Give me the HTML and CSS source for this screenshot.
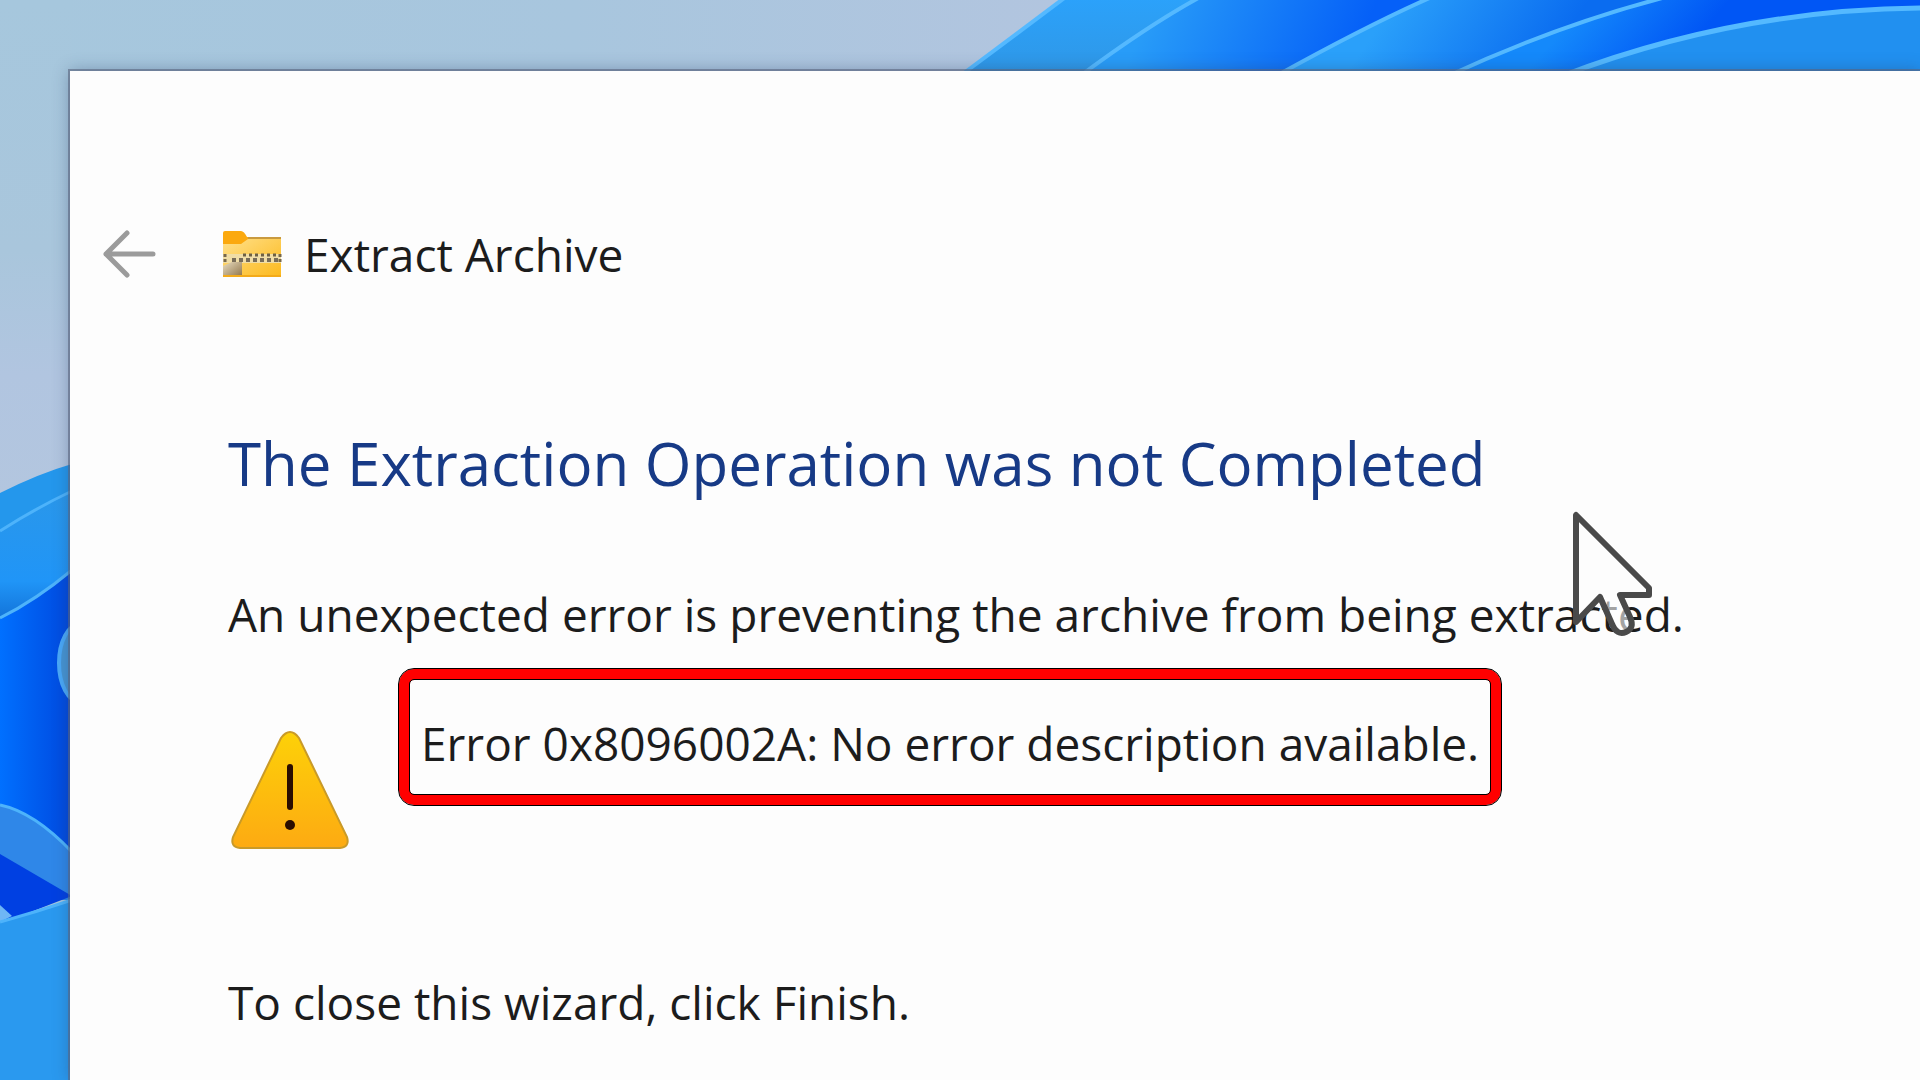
FILE: index.html
```html
<!DOCTYPE html>
<html lang="en">
<head>
    <meta charset="UTF-8">
    <meta name="viewport" content="width=device-width, initial-scale=1.0">
    <title>Extract Archive</title>
    <link rel="stylesheet" href="styles.css">
</head>
<body>
    <!-- Desktop wallpaper -->
    <svg class="wallpaper" viewBox="0 0 1920 1080" preserveAspectRatio="xMinYMin slice" aria-hidden="true">
        <defs>
            <linearGradient id="sky" x1="0" y1="0" x2="1" y2="0">
                <stop offset="0" stop-color="#a6c7dd"/>
                <stop offset="0.3" stop-color="#a8c6de"/>
                <stop offset="0.55" stop-color="#b2c5df"/>
            </linearGradient>
            <linearGradient id="skyLeft" x1="0" y1="0" x2="0" y2="1">
                <stop offset="0" stop-color="#a6c7dd"/>
                <stop offset="0.5" stop-color="#a9c6dc"/>
                <stop offset="0.75" stop-color="#b1c5e0"/>
                <stop offset="1" stop-color="#b3c6df"/>
            </linearGradient>
            <linearGradient id="petalA" x1="0" y1="0" x2="0" y2="1">
                <stop offset="0" stop-color="#2ba2fb"/>
                <stop offset="1" stop-color="#2f97e6"/>
            </linearGradient>
            <linearGradient id="petalB" gradientUnits="userSpaceOnUse" x1="1150" y1="10" x2="1340" y2="90">
                <stop offset="0" stop-color="#289cf8"/>
                <stop offset="1" stop-color="#0560f8"/>
            </linearGradient>
            <linearGradient id="petalC" gradientUnits="userSpaceOnUse" x1="1390" y1="10" x2="1520" y2="100">
                <stop offset="0" stop-color="#2aa0fa"/>
                <stop offset="1" stop-color="#0a6cf0"/>
            </linearGradient>
            <linearGradient id="petalD" gradientUnits="userSpaceOnUse" x1="1580" y1="10" x2="1660" y2="80">
                <stop offset="0" stop-color="#1489fb"/>
                <stop offset="1" stop-color="#0056f5"/>
            </linearGradient>
            <linearGradient id="deep" x1="0" y1="0" x2="1" y2="0">
                <stop offset="0" stop-color="#0070ff"/>
                <stop offset="1" stop-color="#0048de"/>
            </linearGradient>
            <linearGradient id="band" x1="0" y1="0" x2="0" y2="1">
                <stop offset="0" stop-color="#2a97ea"/>
                <stop offset="0.7" stop-color="#2095f7"/>
                <stop offset="1" stop-color="#1272d8"/>
            </linearGradient>
        </defs>
        <rect width="1920" height="1080" fill="url(#sky)"/>
        <rect width="72" height="500" fill="url(#skyLeft)"/>

        <path d="M960 76L1067 -4H1930V76Z" fill="url(#petalA)"/>
        <path d="M1080 76Q1150 24 1202 -4H1930V76Z" fill="url(#petalB)"/>
        <path d="M1276 76Q1370 24 1434 -4H1930V76Z" fill="url(#petalC)"/>
        <path d="M1448 76Q1560 24 1670 -4H1930V76Z" fill="url(#petalD)"/>
        <path d="M1562 76Q1740 8 1930 8V76Z" fill="#2190f0"/>
        <g fill="none" stroke="#54b9ff" stroke-width="4">
            <path d="M960 76L1067 -4"/>
            <path d="M1080 76Q1150 24 1202 -4"/>
            <path d="M1276 76Q1370 24 1434 -4"/>
            <path d="M1448 76Q1560 24 1670 -4"/>
            <path d="M1562 76Q1740 8 1930 8" stroke-width="5"/>
        </g>

        <path d="M0 493Q40 473 72 464V600H0Z" fill="#2497ec"/>
        <path d="M0 531Q36 508 72 491V620H0Z" fill="url(#band)"/>
        <path d="M0 618Q36 600 72 570V900H0Z" fill="url(#deep)"/>
        <ellipse cx="80" cy="663" rx="21" ry="39" fill="#4795d3" stroke="#4aa9f8" stroke-width="4"/>
        <path d="M0 805Q34 812 72 852V900H0Z" fill="#2f87e8"/>
        <path d="M0 854L72 896L10 920H0Z" fill="#0040e2"/>
        <path d="M0 905L12 916L0 922Z" fill="#6fb6f5"/>
        <path d="M0 922Q36 912 72 900V1080H0Z" fill="#2a99ef"/>
        <g fill="none" stroke="#4db3fb" stroke-width="3">
            <path d="M0 531Q36 508 72 491"/>
            <path d="M0 618Q36 600 72 570"/>
            <path d="M0 805Q34 812 72 852"/>
            <path d="M0 922Q36 912 72 900"/>
        </g>
    </svg>

    <main class="wizard">
        <header class="wizard-header">
            <button class="back-button" type="button" aria-label="Back" disabled>
                <svg width="54" height="48" viewBox="0 0 54 48">
                    <path d="M25 3L4 24L25 45M4 24H51" fill="none" stroke="#9b9b9b" stroke-width="5" stroke-linecap="round" stroke-linejoin="round"/>
                </svg>
            </button>
            <svg class="folder-icon" width="60" height="48" viewBox="0 0 60 48" aria-hidden="true">
                <defs>
                    <linearGradient id="folder" x1="0" y1="0" x2="1" y2="1">
                        <stop offset="0" stop-color="#ffe08a"/>
                        <stop offset="1" stop-color="#fcb91c"/>
                    </linearGradient>
                    <linearGradient id="pull" x1="0" y1="0" x2="1" y2="1">
                        <stop offset="0" stop-color="#e8dcc0"/>
                        <stop offset="1" stop-color="#8e7348"/>
                    </linearGradient>
                </defs>
                <path d="M1 3Q1 1 3 1H19Q22 1 25 7H58V20H1Z" fill="#fba90f"/>
                <path d="M1 14H19L26 9H59V47H1Z" fill="url(#folder)"/>
                <path d="M26 8H59" stroke="#c99a3f" stroke-width="2"/>
                <path d="M1 24H59V33H1Z" fill="#f0dda6"/>
                <path d="M21 25H54" stroke="#6d6045" stroke-width="3" stroke-dasharray="3 3"/>
                <path d="M10 30H57" stroke="#776c58" stroke-width="4" stroke-dasharray="4 3"/>
                <path d="M3 24V34M58 24V34" stroke="#77684b" stroke-width="3" stroke-dasharray="3 2"/>
                <path d="M1 47V36L10 32H20V47Z" fill="url(#pull)"/>
                <path d="M1 46H59" stroke="#f3aa19" stroke-width="2"/>
            </svg>
            <h1>Extract Archive</h1>
        </header>

        <section class="wizard-body">
            <h2>The Extraction Operation was not Completed</h2>
            <p class="message">An unexpected error is preventing the archive from being extracted.</p>
            <div class="error-row">
                <svg class="warning-icon" width="120" height="120" viewBox="0 0 120 120" aria-hidden="true">
                    <defs>
                        <linearGradient id="warning" x1="0" y1="0" x2="0" y2="1">
                            <stop offset="0" stop-color="#fdd108"/>
                            <stop offset="1" stop-color="#fdaa12"/>
                        </linearGradient>
                    </defs>
                    <path d="M51 8Q60 -4 69 8L117 107Q120 117 110 118H10Q0 117 3 107Z" fill="url(#warning)" stroke="#c99a28" stroke-width="2"/>
                    <path d="M60 37V77" stroke="#2a0d00" stroke-width="6" stroke-linecap="round"/>
                    <circle cx="60" cy="95" r="5" fill="#2a0d00"/>
                </svg>
                <div class="error-box">
                    <p>Error 0x8096002A: No error description available.</p>
                </div>
            </div>
            <p class="closing">To close this wizard, click Finish.</p>
        </section>
    </main>

    <!-- Mouse pointer -->
    <svg class="cursor" width="88" height="132" viewBox="0 0 88 132" aria-hidden="true">
        <path d="M5 5V112L29 87L41 114Q46 126 55 122Q64 118 59 107L49 85H78V78Z" fill="#fdfdfd" fill-opacity="0.6" stroke="#4a4a4a" stroke-width="6" stroke-linejoin="round"/>
    </svg>
</body>
</html>
```
FILE: styles.css
```css
* {
    box-sizing: border-box;
}

body {
    margin: 0;
    height: 100vh;
    padding: 71px 0 0 70px;
    overflow: hidden;
    position: relative;
    font-family: "Open Sans", "Noto Sans", sans-serif;
    font-size: 46px;
    line-height: 60px;
    color: #1c1c1c;
}

h1,
h2,
p {
    margin: 0;
    font-weight: 400;
    white-space: nowrap;
}

.wallpaper {
    position: absolute;
    top: 0;
    left: 0;
    width: 100%;
    height: 100%;
    z-index: -1;
}

.wizard {
    height: 100%;
    background-color: #fdfdfd;
    box-shadow: 0 0 0 2px rgba(90, 100, 125, 0.6), 0 0 16px rgba(40, 60, 100, 0.4);
    padding: 153px 0 0 32px;
}

.wizard-header {
    display: flex;
    align-items: center;
    height: 60px;
}

.wizard-header h1 {
    font-size: 46px;
    line-height: 60px;
    margin-left: 22px;
}

.back-button {
    display: flex;
    padding: 0;
    border: none;
    background: none;
}

.folder-icon {
    margin-left: 66px;
}

.wizard-body {
    padding: 139px 0 0 126px;
}

.wizard-body h2 {
    font-size: 60px;
    line-height: 80px;
    color: #173a86;
}

.message {
    margin-top: 81px;
}

.error-row {
    display: flex;
    align-items: flex-start;
    margin-top: 24px;
}

.warning-icon {
    margin: 62px 0 0 2px;
}

.error-box {
    margin-left: 48px;
    padding: 44px 22px 32px;
    border: 1px solid #000;
    border-radius: 16px;
    outline: 1px solid #000;
    outline-offset: -12px;
    box-shadow: inset 0 0 0 11px #f00;
}

.closing {
    margin-top: 122px;
}

.cursor {
    position: absolute;
    left: 1571px;
    top: 510px;
}
```
